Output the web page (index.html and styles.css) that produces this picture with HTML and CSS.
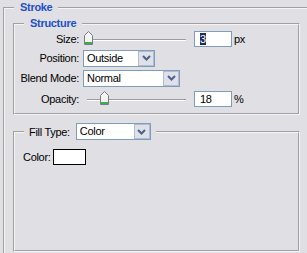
FILE: index.html
```html
<!DOCTYPE html>
<html lang="en">
<head>
    <meta charset="UTF-8">
    <meta name="viewport" content="width=device-width, initial-scale=1.0">
    <title>Stroke</title>
    <link rel="stylesheet" href="styles.css">
</head>
<body>
    <fieldset class="group group-outer">
        <legend class="group-title">Stroke</legend>

        <fieldset class="group group-inner">
            <legend class="group-title">Structure</legend>
            <div class="form-grid">
                <span class="field-label">Size:</span>
                <div class="field-control">
                    <div class="slider">
                        <svg class="slider-thumb" style="left: 0px" width="9" height="14" viewBox="0 0 9 14">
                            <path d="M0.5 13.5 V4.5 L4.5 0.5 L8.5 4.5 V13.5 Z" fill="#f4f4f2" stroke="#7a7a86"/>
                            <path d="M1 12 H8" stroke="#3bb04a" stroke-width="2"/>
                        </svg>
                    </div>
                    <div class="text-box"><span class="text-selected">3</span></div>
                    <span class="unit">px</span>
                </div>

                <span class="field-label">Position:</span>
                <div class="field-control">
                    <div class="select select-position">
                        <span class="select-value">Outside</span>
                        <span class="select-arrow">
                            <svg width="9" height="6" viewBox="0 0 9 6"><polyline points="1,1 4.5,4.5 8,1" fill="none" stroke="#4d6185" stroke-width="2"/></svg>
                        </span>
                    </div>
                </div>

                <span class="field-label">Blend Mode:</span>
                <div class="field-control">
                    <div class="select select-blend">
                        <span class="select-value">Normal</span>
                        <span class="select-arrow">
                            <svg width="9" height="6" viewBox="0 0 9 6"><polyline points="1,1 4.5,4.5 8,1" fill="none" stroke="#4d6185" stroke-width="2"/></svg>
                        </span>
                    </div>
                </div>

                <span class="field-label">Opacity:</span>
                <div class="field-control">
                    <div class="slider">
                        <svg class="slider-thumb" style="left: 16px" width="9" height="14" viewBox="0 0 9 14">
                            <path d="M0.5 13.5 V4.5 L4.5 0.5 L8.5 4.5 V13.5 Z" fill="#f4f4f2" stroke="#7a7a86"/>
                            <path d="M1 12 H8" stroke="#3bb04a" stroke-width="2"/>
                        </svg>
                    </div>
                    <div class="text-box">18</div>
                    <span class="unit">%</span>
                </div>
            </div>
        </fieldset>

        <fieldset class="group group-inner group-fill">
            <legend class="fill-legend">
                <span>Fill Type:</span>
                <div class="select select-fill">
                    <span class="select-value">Color</span>
                    <span class="select-arrow">
                        <svg width="9" height="6" viewBox="0 0 9 6"><polyline points="1,1 4.5,4.5 8,1" fill="none" stroke="#4d6185" stroke-width="2"/></svg>
                    </span>
                </div>
            </legend>
            <div class="fill-body">
                <div class="color-row">
                    <span>Color:</span>
                    <span class="color-swatch"></span>
                </div>
            </div>
        </fieldset>
    </fieldset>
</body>
</html>
```

FILE: styles.css
```css
html, body {
    overflow: hidden;
}

body {
    margin: 0;
    width: 307px;
    height: 253px;
    background-color: #e0dfe3;
    color: #000;
    font: 11px "Liberation Sans", Arial, sans-serif;
    letter-spacing: -0.3px;
}

.group {
    box-sizing: border-box;
    min-width: 0;
    padding: 0;
    border: 2px groove #f4f4f4;
}

/* the dialog is cropped: its right and bottom edges lie outside the picture */
.group-outer {
    margin: 1px 0 0 3px;
    width: 304px;
    height: 252px;
    border-right: 0;
    border-bottom: 0;
}

.group-inner {
    margin: 3px 0 0 8px;
    width: 287px;
    padding-bottom: 3px;
}

.group-title {
    margin-left: 9px;
    padding: 0 6px;
    line-height: 13px;
    color: #2150c9;
    font-weight: bold;
}

.form-grid {
    display: grid;
    grid-template-columns: 65px auto;
    grid-template-rows: 18px 20px 20px 22px;
    column-gap: 3px;
    align-items: center;
}

.field-label {
    text-align: right;
    padding-right: 1px;
}

.field-control {
    display: flex;
    align-items: center;
}

.slider {
    position: relative;
    width: 102px;
    height: 16px;
    margin-left: 1px;
}

.slider::before {
    content: "";
    position: absolute;
    left: 3px;
    right: 0;
    top: 8px;
    height: 0;
    border-top: 1px solid #9d9da1;
    border-bottom: 1px solid #fff;
}

.slider-thumb {
    position: absolute;
    top: 0;
    display: block;
}

.text-box {
    box-sizing: border-box;
    width: 38px;
    height: 16px;
    margin-left: 8px;
    padding-left: 5px;
    line-height: 14px;
    background-color: #fff;
    border: 1px solid #7f9db9;
}

.text-selected {
    background-color: #1b2d5c;
    color: #fff;
}

.unit {
    margin-left: 2px;
}

.select {
    box-sizing: border-box;
    display: flex;
    height: 17px;
    background-color: #fff;
    border: 1px solid #7f9db9;
}

.select-position {
    width: 72px;
}

.select-blend {
    width: 97px;
}

.select-fill {
    width: 75px;
}

.select-value {
    flex: 1;
    padding-left: 3px;
    line-height: 15px;
}

.select-arrow {
    box-sizing: border-box;
    display: flex;
    align-items: center;
    justify-content: center;
    width: 16px;
    height: 15px;
    background-color: #dfe1ea;
    border: 1px solid #b4bdd0;
}

.fill-legend {
    display: flex;
    align-items: center;
    gap: 6px;
    margin-left: 9px;
    padding: 0 5px;
}

.group-fill {
    margin-top: 8px;
    padding-bottom: 0;
}

.fill-body {
    box-sizing: border-box;
    height: 110px;
    padding: 9px 8px 0;
}

.color-row {
    display: flex;
    align-items: center;
    gap: 2px;
}

.color-swatch {
    box-sizing: border-box;
    width: 33px;
    height: 16px;
    background-color: #fff;
    border: 1px solid #000;
}
```
